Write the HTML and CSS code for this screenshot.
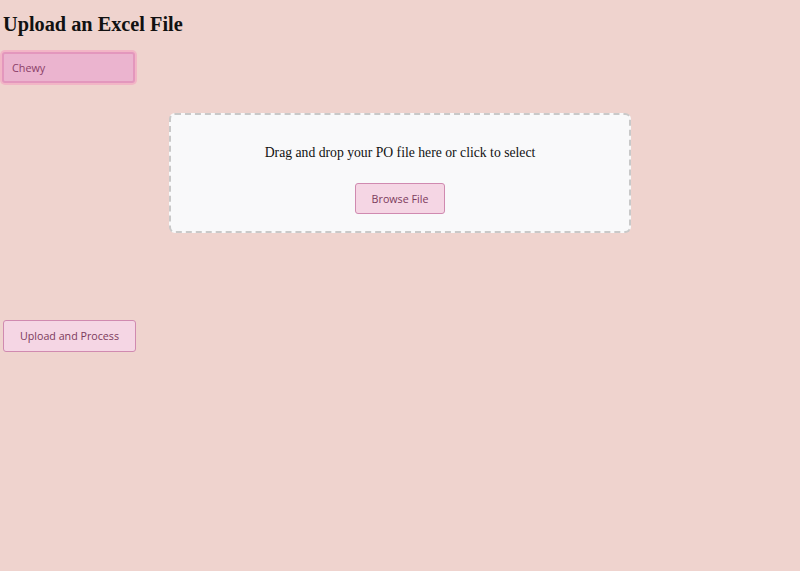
FILE: index.html
```html
<!DOCTYPE html>
<html>
<head>
<meta charset="utf-8">
<link rel="stylesheet" href="styles.css">
</head>
<body>
<h2 class="title">Upload an Excel File</h2>
<select class="vendor">
  <option>Chewy</option>
</select>
<div class="dropzone">
  <p class="drop-text">Drag and drop your PO file here or click to select</p>
  <button class="btn browse">Browse File</button>
</div>
<div class="spacer"></div>
<button class="btn upload">Upload and Process</button>
</body>
</html>
```
FILE: styles.css
```css
html, body {
  margin: 0;
  padding: 0;
  background: #efd3ce;
}
body {
  padding: 0 3px;
  font-family: "Liberation Serif", serif;
}
.title {
  font-size: 20.3px;
  font-weight: bold;
  margin: 12px 0 16px 0;
  line-height: 24px;
  color: #111;
}
.vendor {
  display: block;
  margin-left: -1px;
  width: 133px;
  height: 31px;
  background: #ebb4cf;
  border: 2px solid #e397bd;
  box-shadow: 0 0 0 2px #f2b5c6;
  border-radius: 3px;
  color: #8a4068;
  font-family: "Open Sans", sans-serif;
  font-size: 10.8px;
  padding: 0 8px;
  appearance: none;
  -webkit-appearance: none;
  outline: none;
}
.dropzone {
  width: 458px;
  margin: 30px auto 0 auto;
  background: #f9f9fa;
  border: 2px dashed #c9c9c9;
  border-radius: 6px;
  padding: 29px 0 17px 0;
  text-align: center;
}
.drop-text {
  margin: 0 0 21px 0;
  font-size: 13.7px;
  line-height: 18px;
  color: #111;
}
.btn {
  font-family: "Open Sans", sans-serif;
  font-size: 10.7px;
  color: #7c3a5c;
  background: #f5d6e4;
  border: 1px solid #d08ab0;
  border-radius: 3px;
  cursor: pointer;
}
.browse {
  width: 90px;
  height: 31px;
}
.spacer {
  height: 87px;
}
.upload {
  display: block;
  width: 133px;
  height: 32px;
  margin: 0;
}
```
